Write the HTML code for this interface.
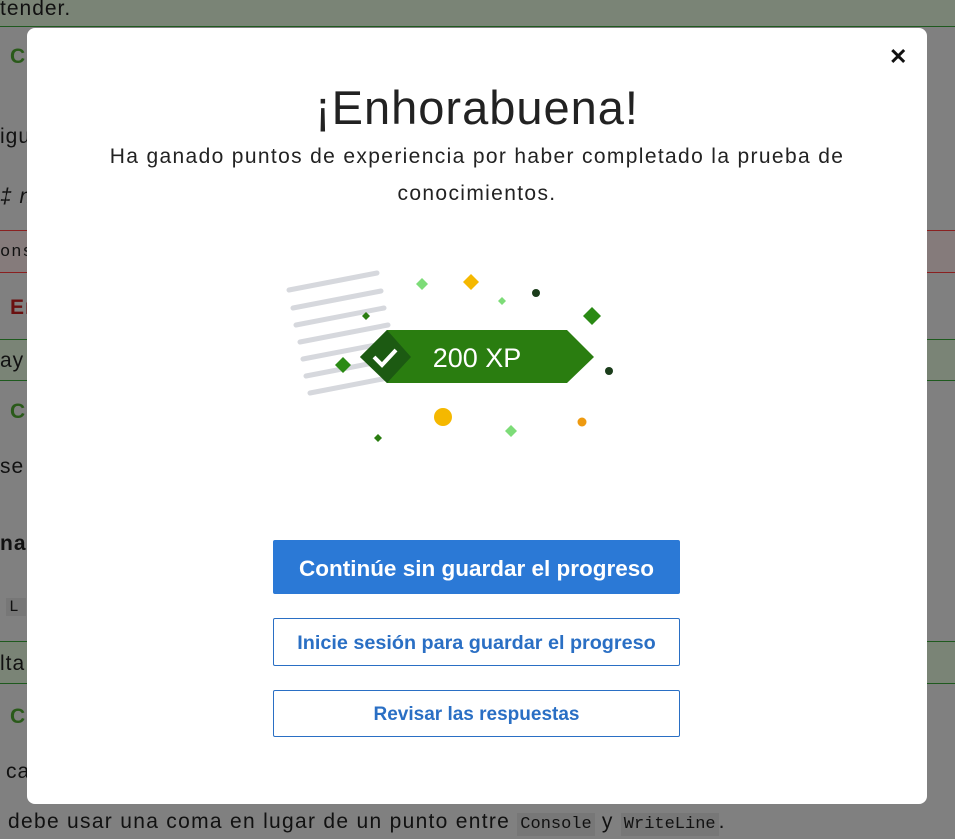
<!DOCTYPE html>
<html><head><meta charset="utf-8"><style>
*{margin:0;padding:0;box-sizing:border-box}
body{width:955px;height:839px;overflow:hidden;background:#808080;font-family:"Liberation Sans",sans-serif;position:relative;color:#111}
.bg{position:absolute;left:0;width:955px;font-size:21px;color:#111;letter-spacing:1px}
.gb{background:#7a8476;border-bottom:1px solid #1e5a1e}
.rb{background:#857b7b;border-top:1px solid #8a2020;border-bottom:1px solid #8a2020}
.modal{position:absolute;left:27px;top:28px;width:900px;height:776px;background:#fff;border-radius:8px}
h1{position:absolute;left:0;width:900px;top:80px;text-align:center;font-weight:normal;font-size:47px;letter-spacing:1px;color:#222}
.sub{position:absolute;left:0;width:900px;top:112px;text-align:center;font-size:21px;letter-spacing:1.35px;line-height:37px;color:#222}
.close{position:absolute;left:862px;top:16px;font-size:22px;font-weight:bold}
.btn{position:absolute;left:246px;width:407px;text-align:center;font-weight:bold;border:1px solid #2a6fc4;border-radius:2px;color:#2a6fc4}
</style></head><body>
<div class="bg gb" style="top:0;height:27px;line-height:18px">tender.</div>
<div class="bg" style="top:45px;left:10px;color:#2a5a1a;font-weight:bold">Co</div>
<div class="bg" style="top:125px;">igu</div>
<div class="bg" style="top:185px;font-style:italic">‡ no</div>
<div class="bg rb" style="top:230px;height:43px;line-height:43px;font-family:'Liberation Mono';font-size:17px">onso</div>
<div class="bg" style="top:296px;left:10px;color:#6a1010;font-weight:bold">Er</div>
<div class="bg gb" style="top:339px;height:42px;line-height:42px;border-top:1px solid #1e5a1e">ay c</div>
<div class="bg" style="top:400px;left:10px;color:#2a5a1a;font-weight:bold">Co</div>
<div class="bg" style="top:455px">se</div>
<div class="bg" style="top:532px;font-weight:bold">na</div>
<div class="bg" style="top:598px;left:6px;font-family:'Liberation Mono';font-size:16px;background:#777;width:20px;padding-left:3px">L</div>
<div class="bg gb" style="top:641px;height:43px;line-height:43px;border-top:1px solid #1e5a1e">lta</div>
<div class="bg" style="top:705px;left:10px;color:#2a5a1a;font-weight:bold">Co</div>
<div class="bg" style="top:760px;left:6px">ca</div>
<div class="bg" style="top:810px;left:8px;letter-spacing:1.3px">debe usar una coma en lugar de un punto entre <span style="font-family:'Liberation Mono';font-size:17px;background:#777;padding:2px 3px;letter-spacing:0">Console</span> y <span style="font-family:'Liberation Mono';font-size:17px;background:#777;padding:2px 3px;letter-spacing:0">WriteLine</span>.</div>
<div class="modal">
<div class="close">✕</div>
<h1 style="top:52px">¡Enhorabuena!</h1>
<div class="sub" style="top:110px">Ha ganado puntos de experiencia por haber completado la prueba de<br>conocimientos.</div>
<svg style="position:absolute;left:0;top:0" width="900" height="776">
<g stroke="#d6d8dd" stroke-width="5" stroke-linecap="round">
<line x1="262" y1="262" x2="350" y2="245"/><line x1="266" y1="280" x2="354" y2="263"/><line x1="269" y1="297" x2="357" y2="280"/><line x1="273" y1="314" x2="361" y2="297"/><line x1="276" y1="331" x2="364" y2="314"/><line x1="279" y1="348" x2="367" y2="331"/><line x1="283" y1="365" x2="371" y2="348"/>
</g>
<polygon points="360,302 540,302 567,329 540,355 360,355 333,329" fill="#2a7d10"/>
<polygon points="360,302 384,329 360,355 333,329" fill="#1c5a12"/>
<polyline points="347,329 355,337 369,322" fill="none" stroke="#fff" stroke-width="4"/>
<text x="450" y="339" text-anchor="middle" font-family="Liberation Sans" font-size="27" fill="#fff">200 XP</text>
<polygon points="395,250 401,256 395,262 389,256" fill="#7ddc78"/>
<polygon points="444,246 452,254 444,262 436,254" fill="#f5b800"/>
<polygon points="475,269 479,273 475,277 471,273" fill="#7ddc78"/>
<circle cx="509" cy="265" r="4" fill="#1b3d1b"/>
<polygon points="565,279 574,288 565,297 556,288" fill="#2a8a14"/>
<polygon points="339,284 343,288 339,292 335,288" fill="#2a7d10"/>
<polygon points="316,329 324,337 316,345 308,337" fill="#2a8a14"/>
<circle cx="582" cy="343" r="4" fill="#1b3d1b"/>
<circle cx="416" cy="389" r="9" fill="#f5b800"/>
<polygon points="484,397 490,403 484,409 478,403" fill="#7ddc78"/>
<circle cx="555" cy="394" r="4.5" fill="#ee9a10"/>
<polygon points="351,406 355,410 351,414 347,410" fill="#2a7d10"/>
</svg>
<div class="btn" style="top:512px;height:54px;line-height:56px;background:#2b79d6;color:#fff;font-size:22.5px;border-color:#2b79d6">Continúe sin guardar el progreso</div>
<div class="btn" style="top:590px;height:48px;line-height:48px;font-size:19.8px">Inicie sesión para guardar el progreso</div>
<div class="btn" style="top:662px;height:47px;line-height:47px;font-size:19px">Revisar las respuestas</div>
</div>
</body></html>
